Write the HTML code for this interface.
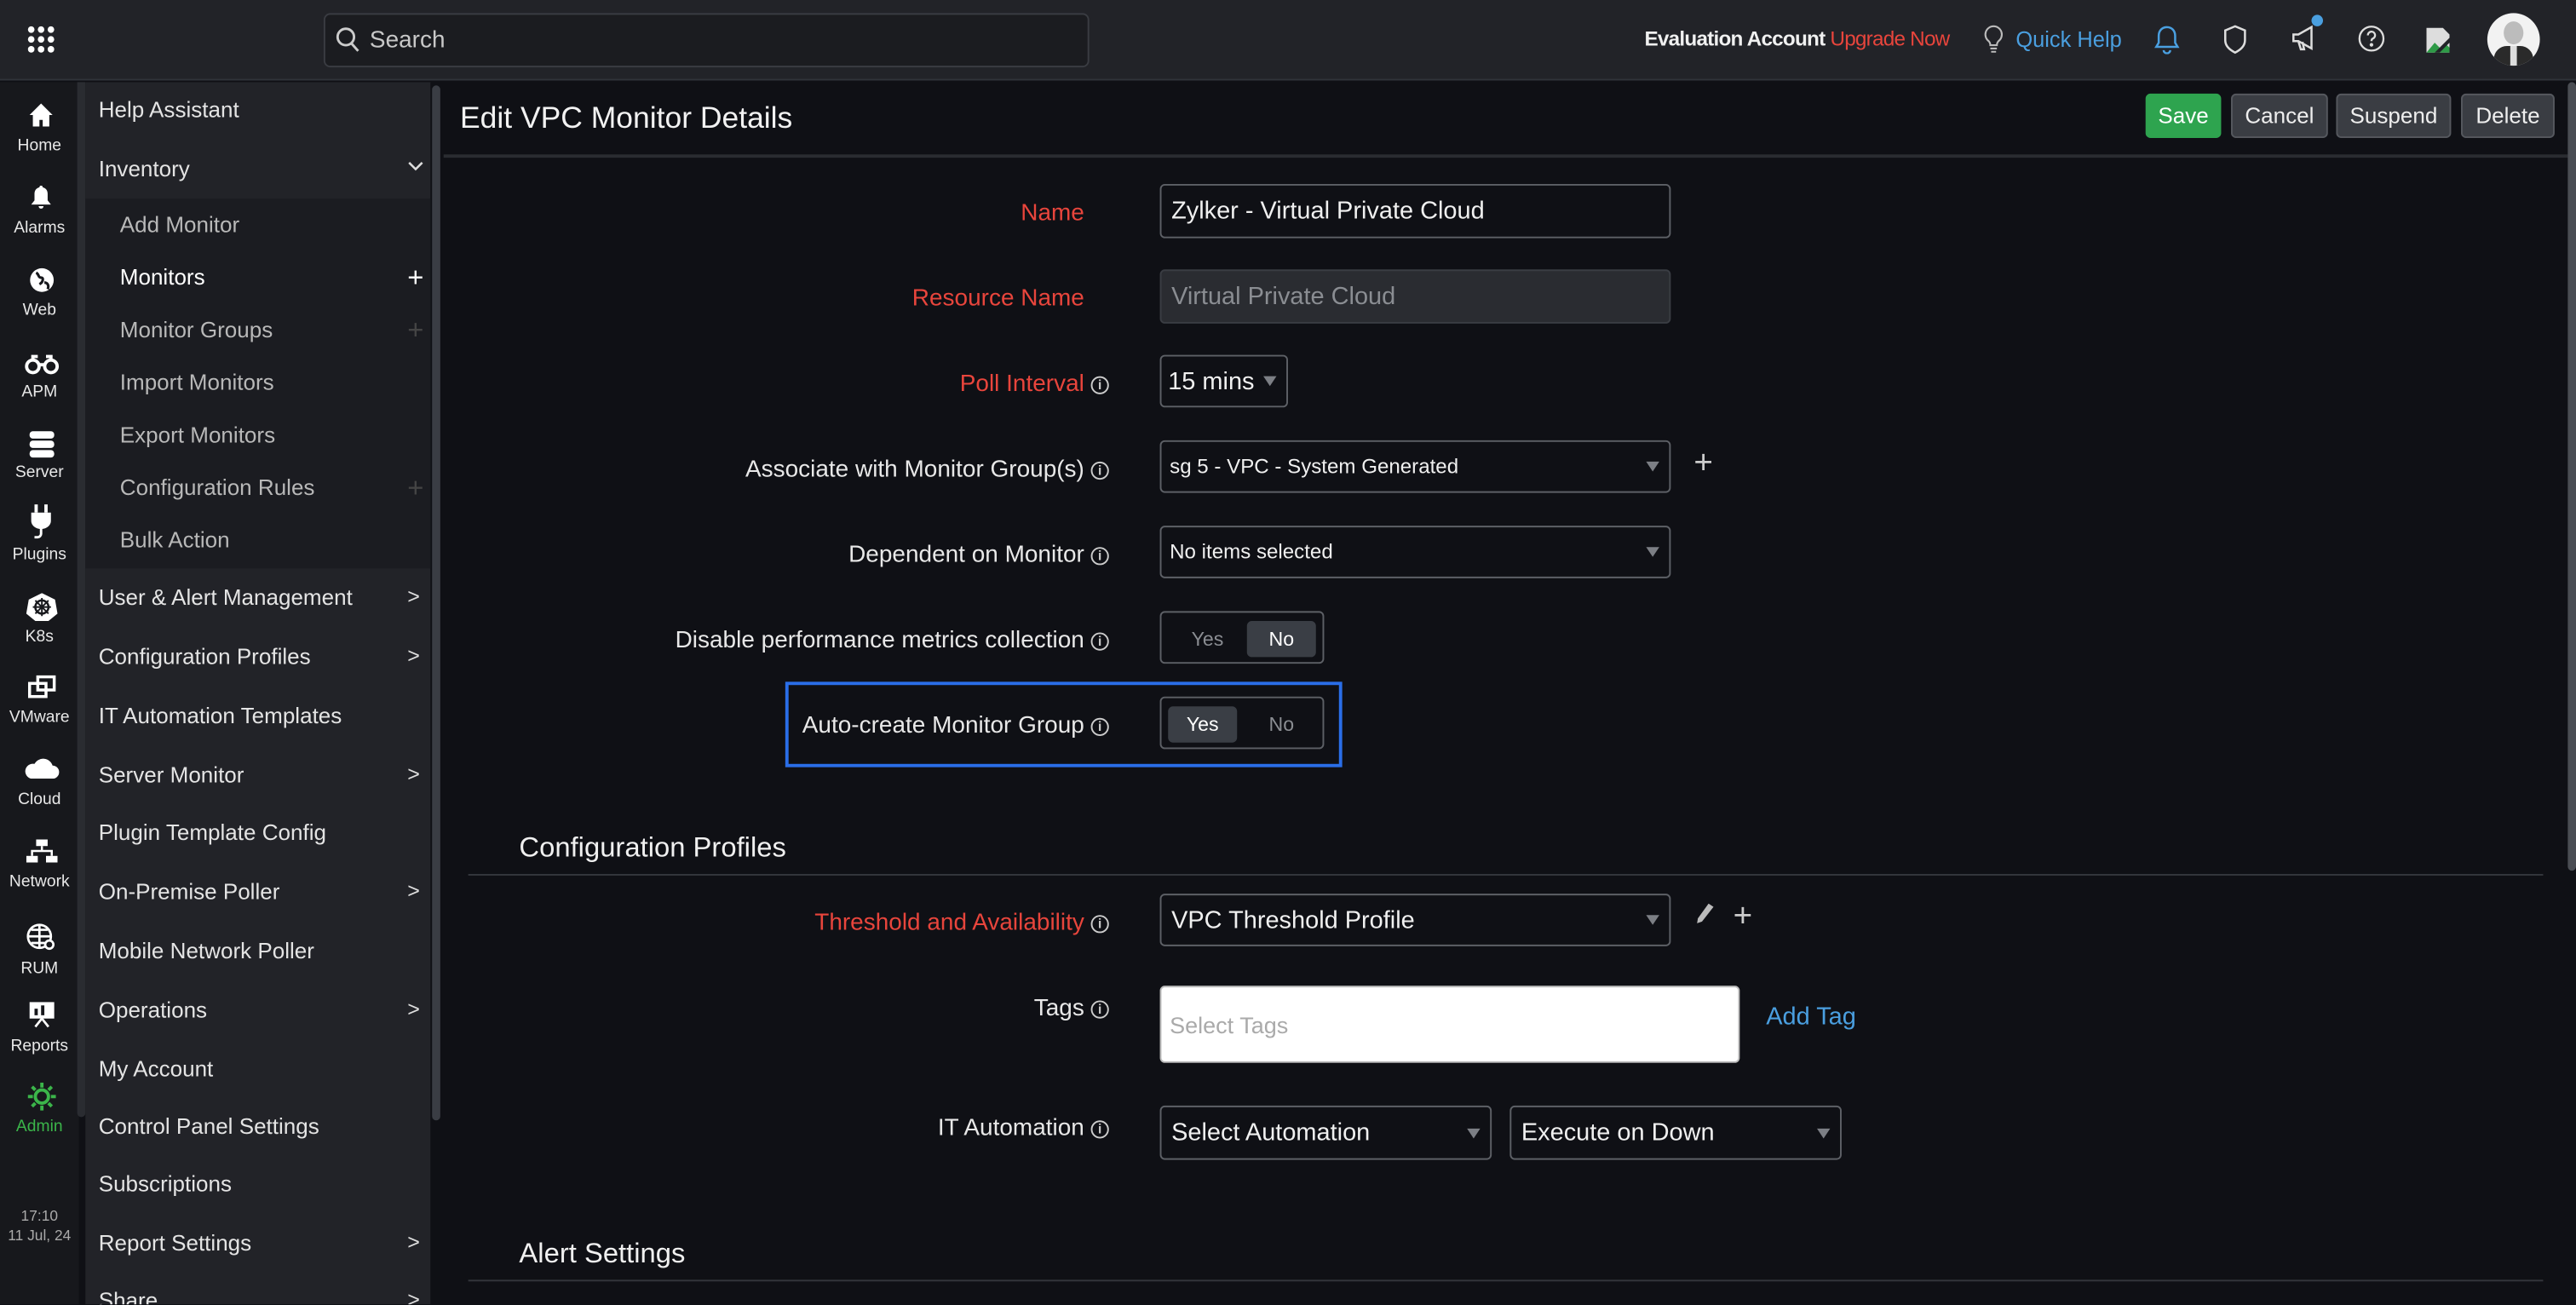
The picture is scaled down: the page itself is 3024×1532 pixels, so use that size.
<!DOCTYPE html>
<html><head><meta charset="utf-8"><style>
*{box-sizing:border-box;margin:0;padding:0}
html,body{width:3024px;height:1532px;overflow:hidden;background:#0f1015}
#s{position:absolute;left:0;top:0;width:1568px;height:794px;transform:scale(1.928571);transform-origin:0 0;font-family:"Liberation Sans",sans-serif;color:#e6e6e6;background:#0f1015;overflow:hidden}
.a{position:absolute}
.t{position:absolute;white-space:nowrap;line-height:1;transform:translateY(-50%)}
.rail .lbl{position:absolute;left:0;width:48px;text-align:center;font-size:10px;color:#e8e8e8;transform:translateY(-50%)}
.nav{font-size:13.5px;color:#e4e4e4}
.sub{color:#b8b8b8}
.chev{position:absolute;left:248px;font-size:13px;color:#ddd;transform:translateY(-50%)}
.lab{position:absolute;right:908px;font-size:14.5px;color:#e8e8e8;transform:translateY(-50%);white-space:nowrap}
.red{color:#e8453c}
.i{display:inline-block;width:11px;height:11px;border:1px solid #ccc;border-radius:50%;font-size:8px;line-height:9px;text-align:center;margin-left:4px;vertical-align:1px;color:#ccc;font-weight:bold}
.inp{position:absolute;border:1px solid #5d6066;border-radius:3px;background:#0f1015;font-size:15px;color:#f0f0f0;padding-left:6px;display:flex;align-items:center}
.arr{position:absolute;right:6px;top:50%;margin-top:-3px;width:0;height:0;border-left:4px solid transparent;border-right:4px solid transparent;border-top:6px solid #7c7f85}
.btn{position:absolute;top:57px;height:27px;border-radius:3px;background:#3a3d43;border:1px solid #55585e;font-size:13.5px;color:#eee;display:flex;align-items:center;justify-content:center}
.tg{position:absolute;left:706px;width:100px;border:1px solid #5d6066;border-radius:3px}
.tg span{position:absolute;top:5px;height:22px;width:42px;border-radius:3px;font-size:12px;display:flex;align-items:center;justify-content:center;color:#8a8d92}
.tg span.on{background:#3a3e45;color:#fff}
</style></head><body><div id="s">
<div class="a" style="left:0;top:0;width:1568px;height:49px;background:#222328;border-bottom:1px solid #30333a"></div>
<svg class="a" style="left:16px;top:15px" width="18" height="18" viewBox="0 0 18 18" fill="#fff"><circle cx="3" cy="3" r="2"/><circle cx="9" cy="3" r="2"/><circle cx="15" cy="3" r="2"/><circle cx="3" cy="9" r="2"/><circle cx="9" cy="9" r="2"/><circle cx="15" cy="9" r="2"/><circle cx="3" cy="15" r="2"/><circle cx="9" cy="15" r="2"/><circle cx="15" cy="15" r="2"/></svg>
<div class="a" style="left:197px;top:8px;width:466px;height:33px;background:#1b1c20;border:1px solid #3a3c42;border-radius:4px"></div>
<svg class="a" style="left:204px;top:16px" width="15" height="16" viewBox="0 0 15 16" fill="none" stroke="#ccc" stroke-width="1.5"><circle cx="6.5" cy="6.5" r="5"/><path d="M10 10.5l4 4.5"/></svg>
<div class="t" style="left:225px;top:25px;font-size:14.5px;color:#c8c8c8">Search</div>
<div class="t" style="left:1001px;top:24px;font-size:12.6px;font-weight:bold;color:#f0f0f0;letter-spacing:-0.4px">Evaluation Account <span style="font-weight:normal;color:#e8453c">Upgrade Now</span></div>
<svg class="a" style="left:1207px;top:15px" width="13" height="18" viewBox="0 0 13 18" fill="none" stroke="#bbb" stroke-width="1.1"><path d="M6.5 1a5 5 0 0 0-3 9c.6.6 1 1.3 1 2.5h4c0-1.2.4-1.9 1-2.5a5 5 0 0 0-3-9z"/><path d="M4.5 14.5h4M5 16.5h3"/></svg>
<div class="t" style="left:1227px;top:24px;font-size:13.2px;color:#4a9fe0">Quick Help</div>
<svg class="a" style="left:1311px;top:15px" width="16" height="18" viewBox="0 0 16 18" fill="none" stroke="#4a9fe0" stroke-width="1.3"><path d="M8 1.5c-3 0-5 2.3-5 5.3v4.2L1.5 13.5h13L13 11V6.8c0-3-2-5.3-5-5.3z"/><path d="M6 15.5a2 2 0 0 0 4 0"/></svg>
<svg class="a" style="left:1353px;top:15px" width="15" height="18" viewBox="0 0 15 18" fill="none" stroke="#ddd" stroke-width="1.3"><path d="M7.5 1L1.5 3.5v6c0 3.5 3 6 6 7.5 3-1.5 6-4 6-7.5v-6z"/></svg>
<svg class="a" style="left:1394px;top:14px" width="18" height="19" viewBox="0 0 18 19" fill="none" stroke="#ddd" stroke-width="1.3"><path d="M2 7h3l8-4.5v13L5 11H2z"/><path d="M5 11l1.5 5h2L7.5 11.5"/></svg>
<div class="a" style="left:1407px;top:9px;width:7px;height:7px;border-radius:50%;background:#4a9fe0"></div>
<svg class="a" style="left:1435px;top:15px" width="17" height="17" viewBox="0 0 17 17" fill="none" stroke="#ddd" stroke-width="1.2"><circle cx="8.5" cy="8.5" r="7.3"/><path d="M6.3 6.5a2.2 2.2 0 1 1 3 2c-.6.3-.8.7-.8 1.5"/><circle cx="8.5" cy="12.3" r=".5" fill="#ddd"/></svg>
<svg class="a" style="left:1476px;top:16px" width="16" height="17" viewBox="0 0 16 17"><path d="M1 1h10l4 4v11H1z" fill="#ddd"/><path d="M1 16l5-6 4 4 3-3 2 2v3z" fill="#2e9a47"/><path d="M6 16l9-9v3l-6 6z" fill="#222328"/></svg>
<div class="a" style="left:1514px;top:8px;width:32px;height:32px;border-radius:50%;background:#f2f2f2;overflow:hidden"><div class="a" style="left:10px;top:5px;width:12px;height:14px;border-radius:50%;background:#bcbcbc"></div><div class="a" style="left:4px;top:20px;width:24px;height:14px;border-radius:8px 8px 0 0;background:#2a2a2a"></div><div class="a" style="left:14px;top:20px;width:4px;height:12px;background:#ddd"></div></div>

<div class="a rail" style="left:0;top:50px;width:48px;height:744px;background:#17181c"></div>
<div class="a" style="left:47px;top:50px;width:5px;height:630px;background:#2a2c31;border-radius:0 0 3px 3px"></div>
<div class="rail">
<svg class="a" style="left:17px;top:62px" width="16" height="16" viewBox="0 0 16 16" fill="#fff"><path d="M8 1L1 8h2v7h4v-4h2v4h4V8h2z"/></svg><div class="lbl" style="top:89px">Home</div>
<svg class="a" style="left:19px;top:113px" width="12" height="15" viewBox="0 0 12 15" fill="#fff"><path d="M6 0c-.6 0-1 .4-1 1C3 1.5 2 3 2 5v4L0 11.5h12L10 9V5c0-2-1-3.5-3-4 0-.6-.4-1-1-1zM4.5 12.5a1.5 1.5 0 0 0 3 0z"/></svg><div class="lbl" style="top:139px">Alarms</div>
<svg class="a" style="left:18px;top:163px" width="15" height="15" viewBox="0 0 15 15"><circle cx="7.5" cy="7.5" r="7.2" fill="#fff"/><path d="M4 3c2 1 1 3 3 3s1 3-1 4M9 9c2 0 3 2 2 4" stroke="#17181c" stroke-width="1.6" fill="none"/></svg><div class="lbl" style="top:189px">Web</div>
<svg class="a" style="left:15px;top:215px" width="21" height="13" viewBox="0 0 21 13" fill="none" stroke="#fff" stroke-width="2"><circle cx="5" cy="8" r="3.8"/><circle cx="16" cy="8" r="3.8"/><path d="M5 4V2h3M16 4V2h-3M9 7h3"/></svg><div class="lbl" style="top:239px">APM</div>
<svg class="a" style="left:17px;top:262px" width="17" height="17" viewBox="0 0 17 17" fill="#fff"><rect x="1" y="0.5" width="15" height="4.5" rx="2"/><rect x="1" y="6.2" width="15" height="4.5" rx="2"/><rect x="1" y="12" width="15" height="4.5" rx="2"/></svg><div class="lbl" style="top:288px">Server</div>
<svg class="a" style="left:18px;top:307px" width="14" height="22" viewBox="0 0 14 22" fill="#fff"><rect x="3" y="0" width="2" height="5"/><rect x="9" y="0" width="2" height="5"/><path d="M1 5h12v5c0 3-3 5-6 5S1 13 1 10z"/><path d="M7 15v3c0 1-1 2-2 2H3" stroke="#fff" stroke-width="1.5" fill="none"/></svg><div class="lbl" style="top:338px">Plugins</div>
<svg class="a" style="left:16px;top:361px" width="19" height="17" viewBox="0 0 19 17"><path d="M9.5 0l8 4 1.5 8.5-5.5 4.5H5.5L0 12.5 1.5 4z" fill="#fff"/><circle cx="9.5" cy="8.5" r="4" fill="none" stroke="#17181c" stroke-width="1.3"/><path d="M9.5 3v11M4 8.5h11M5.5 4.5l8 8M13.5 4.5l-8 8" stroke="#17181c" stroke-width="1"/></svg><div class="lbl" style="top:388px">K8s</div>
<svg class="a" style="left:17px;top:411px" width="17" height="15" viewBox="0 0 17 15" fill="none" stroke="#fff" stroke-width="1.8"><rect x="1" y="5" width="10" height="8"/><rect x="6" y="1" width="10" height="8"/></svg><div class="lbl" style="top:437px">VMware</div>
<svg class="a" style="left:15px;top:461px" width="21" height="13" viewBox="0 0 21 13" fill="#fff"><path d="M4 13h13a4 4 0 0 0 0-8 6 6 0 0 0-11-1A4.5 4.5 0 0 0 4 13z"/></svg><div class="lbl" style="top:487px">Cloud</div>
<svg class="a" style="left:16px;top:511px" width="19" height="16" viewBox="0 0 19 16" fill="#fff"><rect x="6" y="0" width="7" height="4"/><rect x="0" y="10" width="7" height="4"/><rect x="12" y="10" width="7" height="4"/><path d="M9.5 4v3M3.5 10V7h12v3" stroke="#fff" stroke-width="1.3" fill="none"/></svg><div class="lbl" style="top:537px">Network</div>
<svg class="a" style="left:16px;top:562px" width="19" height="17" viewBox="0 0 19 17" fill="none" stroke="#fff" stroke-width="1.4"><circle cx="8" cy="8" r="7"/><path d="M1 8h14M8 1v14M3 4h10M3 12h10"/><circle cx="14" cy="13" r="2.5" fill="#17181c"/></svg><div class="lbl" style="top:590px">RUM</div>
<svg class="a" style="left:17px;top:609px" width="17" height="17" viewBox="0 0 17 17"><rect x="1" y="1" width="15" height="10" fill="#fff"/><rect x="4" y="5" width="2" height="4" fill="#17181c"/><rect x="8" y="3" width="2" height="6" fill="#17181c"/><path d="M8.5 11l-4 5M8.5 11l4 5" stroke="#fff" stroke-width="1.4"/></svg><div class="lbl" style="top:637px">Reports</div>
<svg class="a" style="left:16px;top:659px" width="19" height="17" viewBox="0 0 19 17" fill="none" stroke="#3bb54a" stroke-width="2"><circle cx="9.5" cy="8.5" r="4"/><path d="M9.5 0v3M9.5 14v3M1 8.5h3M15 8.5h3M3.5 2.5l2 2M13.5 12.5l2 2M15.5 2.5l-2 2M5.5 12.5l-2 2"/></svg><div class="lbl" style="top:686px;color:#3bb54a">Admin</div>
<div class="lbl" style="top:740px;font-size:9px;color:#aaa">17:10</div>
<div class="lbl" style="top:752px;font-size:9px;color:#aaa">11 Jul, 24</div>
</div>

<div class="a" style="left:52px;top:50px;width:210px;height:744px;background:#222328"></div>
<div class="a" style="left:52px;top:121px;width:210px;height:225px;background:#1b1c21"></div>
<div class="a" style="left:263px;top:52px;width:5px;height:630px;background:#3a3d44;border-radius:3px"></div>
<div class="nav">
<div class="t" style="left:60px;top:67px">Help Assistant</div>
<div class="t" style="left:60px;top:103px">Inventory</div>
<svg class="a" style="left:248px;top:98px" width="10" height="7" viewBox="0 0 10 7" fill="none" stroke="#ddd" stroke-width="1.3"><path d="M1 1l4 4 4-4"/></svg>
<div class="t sub" style="left:73px;top:137px">Add Monitor</div>
<div class="t" style="left:73px;top:169px;color:#fff">Monitors</div>
<div class="t" style="left:248px;top:169px;font-size:17px;color:#fff">+</div>
<div class="t sub" style="left:73px;top:201px">Monitor Groups</div>
<div class="t" style="left:248px;top:201px;font-size:17px;color:#444">+</div>
<div class="t sub" style="left:73px;top:233px">Import Monitors</div>
<div class="t sub" style="left:73px;top:265px">Export Monitors</div>
<div class="t sub" style="left:73px;top:297px">Configuration Rules</div>
<div class="t" style="left:248px;top:297px;font-size:17px;color:#444">+</div>
<div class="t sub" style="left:73px;top:329px">Bulk Action</div>
<div class="t" style="left:60px;top:364px">User &amp; Alert Management</div><div class="chev" style="top:363px">&gt;</div>
<div class="t" style="left:60px;top:400px">Configuration Profiles</div><div class="chev" style="top:399px">&gt;</div>
<div class="t" style="left:60px;top:436px">IT Automation Templates</div>
<div class="t" style="left:60px;top:472px">Server Monitor</div><div class="chev" style="top:471px">&gt;</div>
<div class="t" style="left:60px;top:507px">Plugin Template Config</div>
<div class="t" style="left:60px;top:543px">On-Premise Poller</div><div class="chev" style="top:542px">&gt;</div>
<div class="t" style="left:60px;top:579px">Mobile Network Poller</div>
<div class="t" style="left:60px;top:615px">Operations</div><div class="chev" style="top:614px">&gt;</div>
<div class="t" style="left:60px;top:651px">My Account</div>
<div class="t" style="left:60px;top:686px">Control Panel Settings</div>
<div class="t" style="left:60px;top:721px">Subscriptions</div>
<div class="t" style="left:60px;top:757px">Report Settings</div><div class="chev" style="top:756px">&gt;</div>
<div class="t" style="left:60px;top:792px">Share</div><div class="chev" style="top:791px">&gt;</div>
</div>

<div class="a" style="left:270px;top:94px;width:1293px;height:2px;background:#2a2c31"></div>
<div class="a" style="left:1563px;top:50px;width:5px;height:480px;background:#4a4d53;border-radius:3px"></div>
<div class="t" style="left:280px;top:72px;font-size:18.4px;color:#f2f2f2">Edit VPC Monitor Details</div>
<div class="btn" style="left:1306px;width:46px;background:#2ea44f;border-color:#2ea44f;color:#fff">Save</div>
<div class="btn" style="left:1358px;width:59px">Cancel</div>
<div class="btn" style="left:1422px;width:70px">Suspend</div>
<div class="btn" style="left:1498px;width:57px">Delete</div>

<div class="lab red" style="top:130px">Name</div>
<div class="inp" style="left:706px;top:112px;width:311px;height:33px">Zylker - Virtual Private Cloud</div>
<div class="lab red" style="top:182px">Resource Name</div>
<div class="inp" style="left:706px;top:164px;width:311px;height:33px;background:#2a2c31;color:#8a8d92;border-color:#3a3d43">Virtual Private Cloud</div>
<div class="lab" style="top:234px;right:893px"><span class="red">Poll Interval</span><span class="i">i</span></div>
<div class="inp" style="left:706px;top:216px;width:78px;height:32px;padding-left:4px">15 mins<div class="arr"></div></div>
<div class="lab" style="top:286px;right:893px">Associate with Monitor Group(s)<span class="i">i</span></div>
<div class="inp" style="left:706px;top:268px;width:311px;height:32px;font-size:12.5px;padding-left:5px">sg 5 - VPC - System Generated<div class="arr"></div></div>
<div class="t" style="left:1031px;top:282px;font-size:20px;color:#ccc">+</div>
<div class="lab" style="top:338px;right:893px">Dependent on Monitor<span class="i">i</span></div>
<div class="inp" style="left:706px;top:320px;width:311px;height:32px;font-size:12.5px;padding-left:5px">No items selected<div class="arr"></div></div>
<div class="lab" style="top:390px;right:893px">Disable performance metrics collection<span class="i">i</span></div>
<div class="tg" style="top:372px;height:32px"><span style="left:7px">Yes</span><span class="on" style="left:52px">No</span></div>
<div class="a" style="left:478px;top:415px;width:339px;height:52px;border:2px solid #2a6ee8"></div>
<div class="lab" style="top:442px;right:893px">Auto-create Monitor Group<span class="i">i</span></div>
<div class="tg" style="top:424px;height:32px"><span class="on" style="left:4px">Yes</span><span style="left:52px">No</span></div>

<div class="t" style="left:316px;top:516px;font-size:17px;color:#f0f0f0">Configuration Profiles</div>
<div class="a" style="left:285px;top:532px;width:1263px;height:1px;background:#34363c"></div>
<div class="lab" style="top:562px;right:893px"><span class="red">Threshold and Availability</span><span class="i">i</span></div>
<div class="inp" style="left:706px;top:544px;width:311px;height:32px">VPC Threshold Profile<div class="arr"></div></div>
<svg class="a" style="left:1032px;top:550px" width="11" height="13" viewBox="0 0 11 13"><path d="M8 0l3 2-7 9-3 1 .5-3z" fill="#bbb"/></svg>
<div class="t" style="left:1055px;top:558px;font-size:20px;color:#ccc">+</div>
<div class="lab" style="top:614px;right:893px">Tags<span class="i">i</span></div>
<div class="a" style="left:706px;top:600px;width:353px;height:47px;background:#fff;border:1px solid #bbb;border-radius:3px"></div>
<div class="t" style="left:712px;top:624px;font-size:14px;color:#aaa">Select Tags</div>
<div class="t" style="left:1075px;top:619px;font-size:15px;color:#4a9fe0">Add Tag</div>
<div class="lab" style="top:687px;right:893px">IT Automation<span class="i">i</span></div>
<div class="inp" style="left:706px;top:673px;width:202px;height:33px">Select Automation<div class="arr"></div></div>
<div class="inp" style="left:919px;top:673px;width:202px;height:33px">Execute on Down<div class="arr"></div></div>
<div class="t" style="left:316px;top:763px;font-size:17px;color:#f0f0f0">Alert Settings</div>
<div class="a" style="left:285px;top:779px;width:1263px;height:1px;background:#34363c"></div>
</div></body></html>
